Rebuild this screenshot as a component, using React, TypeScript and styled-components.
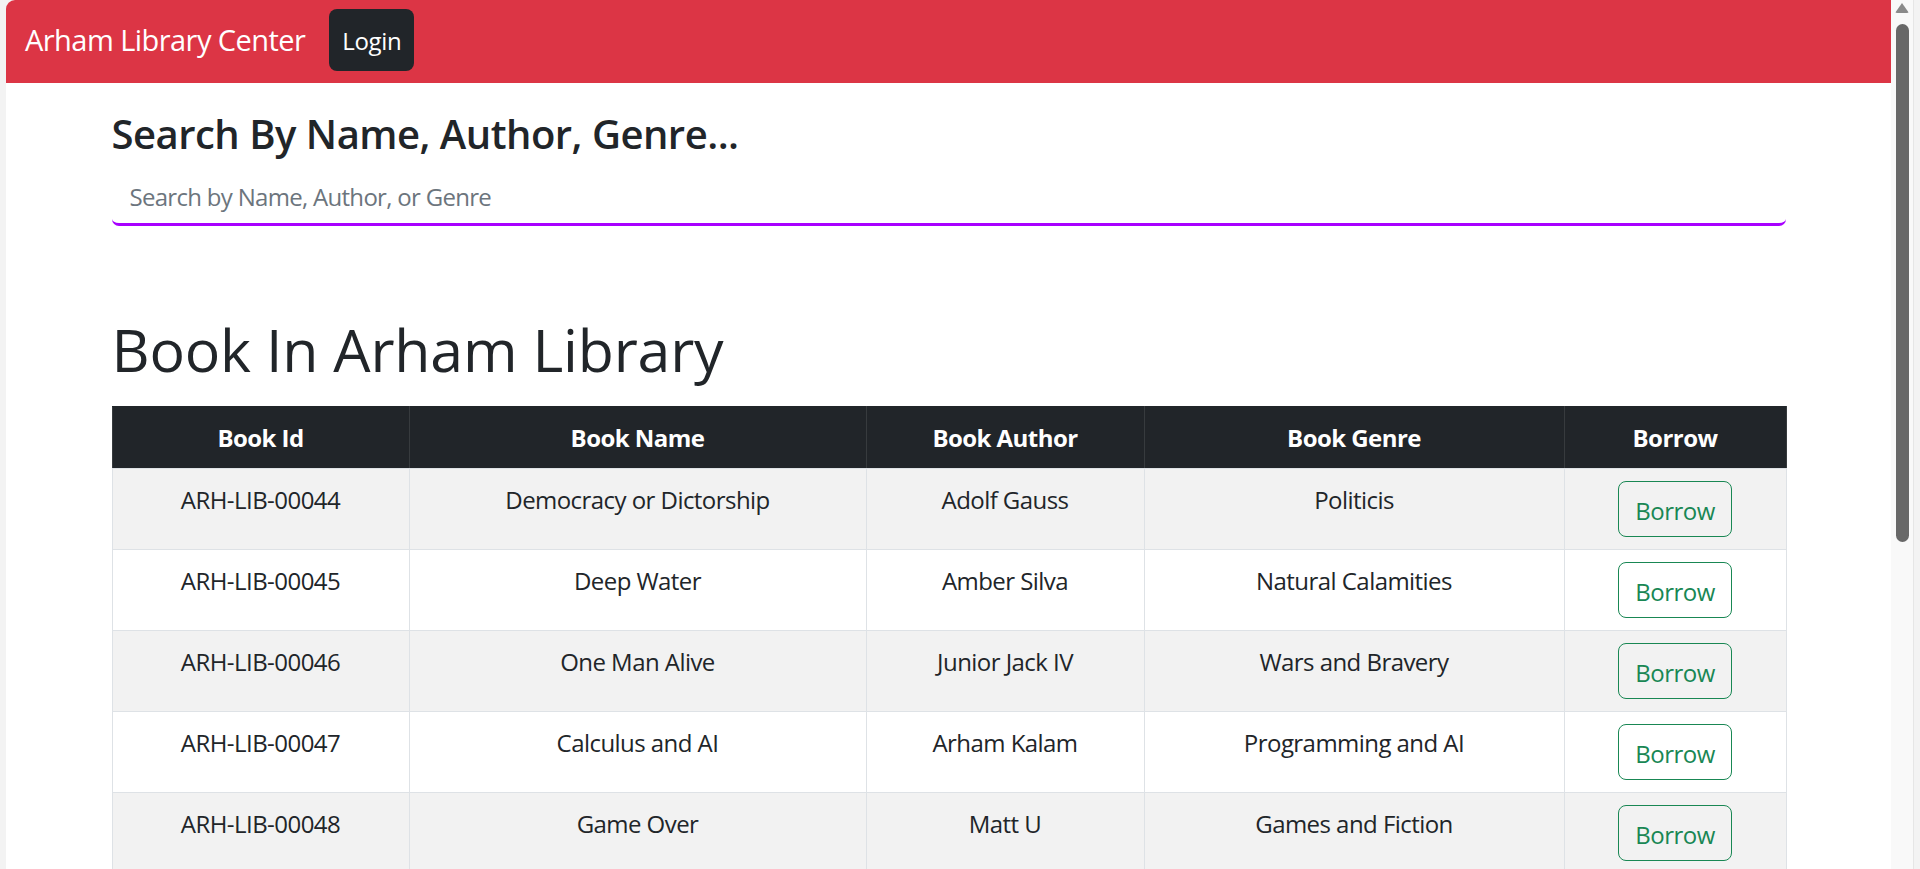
import React from "react";
import styled, { createGlobalStyle } from "styled-components";

const GlobalStyle = createGlobalStyle`
  html, body {
    margin: 0;
    padding: 0;
    height: 869px;
    overflow: hidden;
    background: #f3f3f3;
  }
  * { box-sizing: border-box; }
  body {
    font-family: "Open Sans", "Noto Sans", sans-serif;
    color: #212529;
  }
`;

const Frame = styled.div`
  display: flex;
  height: 869px;
  padding: 0 6px;
`;

const Page = styled.div`
  flex: 1;
  background: #ffffff;
  border-top-left-radius: 9px;
  overflow: hidden;
  display: flex;
  flex-direction: column;
`;

const ScrollTrack = styled.div`
  width: 23px;
  background: #f9f9f9;
  border-right: 1px solid #e6e6e6;
  display: flex;
  flex-direction: column;
  align-items: center;
  padding-top: 3px;
`;

const ScrollArrow = styled.div`
  width: 0;
  height: 0;
  border-left: 7px solid transparent;
  border-right: 7px solid transparent;
  border-bottom: 10px solid #8a8a8a;
  border-radius: 2px;
`;

const ScrollThumb = styled.div`
  margin-top: 11px;
  width: 13px;
  height: 518px;
  border-radius: 7px;
  background: #686868;
`;

const NavBar = styled.nav`
  height: 83px;
  flex-shrink: 0;
  background: #dc3545;
  display: flex;
  align-items: flex-start;
  padding: 9px 0 0 19px;
`;

const Brand = styled.span`
  color: #ffffff;
  font-size: 29px;
  line-height: 62px;
  margin-right: 24px;
  letter-spacing: -0.55px;
`;

const LoginButton = styled.button`
  height: 62px;
  width: 85px;
  border: none;
  border-radius: 8px;
  background: #212529;
  color: #ffffff;
  font-family: inherit;
  font-size: 24px;
  letter-spacing: -0.3px;
  padding: 0;
`;

const Container = styled.main`
  width: 1674px;
  margin: 0 auto;
`;

const SearchTitle = styled.h2`
  margin: 27px 0 12px;
  font-size: 40px;
  font-weight: 600;
  line-height: 48px;
  letter-spacing: -0.5px;
`;

const SearchInput = styled.input`
  display: block;
  width: 100%;
  height: 56px;
  border: none;
  border-bottom: 3px solid #a800ff;
  border-radius: 7px;
  padding: 7px 18px;
  font-family: inherit;
  font-size: 24px;
  line-height: 37px;
  letter-spacing: -0.7px;
  color: #212529;
  outline: none;
  background: #ffffff;
  &::placeholder {
    color: #6c757d;
  }
`;

const LibraryTitle = styled.h1`
  margin: 87px 0 21px;
  font-size: 59px;
  font-weight: 500;
  line-height: 72px;
  letter-spacing: -0.2px;
`;

const Table = styled.table`
  width: 100%;
  table-layout: fixed;
  border-collapse: collapse;
  font-size: 24px;
`;

const HeadCell = styled.th<{ $w: number }>`
  width: ${(p) => p.$w}px;
  background: #212529;
  color: #ffffff;
  font-weight: 700;
  text-align: center;
  padding: 12px 10px 12px;
  line-height: 37px;
  border: 1px solid #373b3e;
  border-top-color: #212529;
  border-bottom-color: #dee2e6;
  letter-spacing: -0.55px;
`;

const Row = styled.tr<{ $striped: boolean }>`
  background: ${(p) => (p.$striped ? "#f2f2f2" : "#ffffff")};
`;

const Cell = styled.td`
  text-align: center;
  vertical-align: top;
  padding: 12px 10px 12px;
  line-height: 37px;
  border: 1px solid #dee2e6;
  letter-spacing: -0.55px;
`;

const BorrowButton = styled.button`
  height: 56px;
  width: 114px;
  padding: 0;
  border: 1px solid #198754;
  border-radius: 8px;
  background: transparent;
  color: #198754;
  font-family: inherit;
  font-size: 24px;
  letter-spacing: -0.5px;
  line-height: 37px;
  padding-top: 3px;
`;

const columns = [
  { label: "Book Id", w: 297 },
  { label: "Book Name", w: 457 },
  { label: "Book Author", w: 278 },
  { label: "Book Genre", w: 420 },
  { label: "Borrow", w: 222 },
];

const books = [
  ["ARH-LIB-00044", "Democracy or Dictorship", "Adolf Gauss", "Politicis"],
  ["ARH-LIB-00045", "Deep Water", "Amber Silva", "Natural Calamities"],
  ["ARH-LIB-00046", "One Man Alive", "Junior Jack IV", "Wars and Bravery"],
  ["ARH-LIB-00047", "Calculus and AI", "Arham Kalam", "Programming and AI"],
  ["ARH-LIB-00048", "Game Over", "Matt U", "Games and Fiction"],
];

export default function App() {
  return (
    <>
      <GlobalStyle />
      <Frame>
        <Page>
          <NavBar>
            <Brand>Arham Library Center</Brand>
            <LoginButton>Login</LoginButton>
          </NavBar>
          <Container>
            <SearchTitle>Search By Name, Author, Genre...</SearchTitle>
            <SearchInput placeholder="Search by Name, Author, or Genre" />
            <LibraryTitle>Book In Arham Library</LibraryTitle>
            <Table>
              <thead>
                <tr>
                  {columns.map((c) => (
                    <HeadCell key={c.label} $w={c.w}>
                      {c.label}
                    </HeadCell>
                  ))}
                </tr>
              </thead>
              <tbody>
                {books.map((b, i) => (
                  <Row key={b[0]} $striped={i % 2 === 0}>
                    {b.map((v) => (
                      <Cell key={v}>{v}</Cell>
                    ))}
                    <Cell>
                      <BorrowButton>Borrow</BorrowButton>
                    </Cell>
                  </Row>
                ))}
              </tbody>
            </Table>
          </Container>
        </Page>
        <ScrollTrack>
          <ScrollArrow />
          <ScrollThumb />
        </ScrollTrack>
      </Frame>
    </>
  );
}
